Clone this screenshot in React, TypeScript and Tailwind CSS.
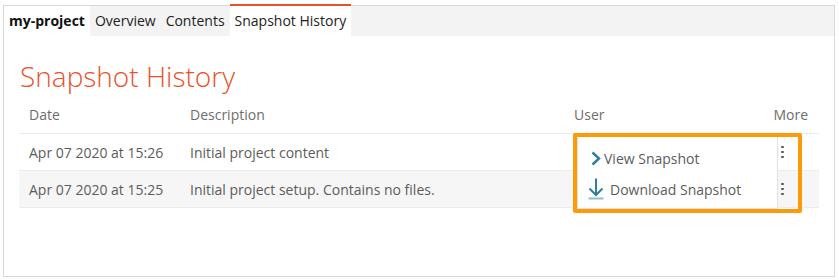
const ROWS = [
  { date: 'Apr 07 2020 at 15:26', desc: 'Initial project content', shade: false },
  { date: 'Apr 07 2020 at 15:25', desc: 'Initial project setup. Contains no files.', shade: true },
]

function Chevron() {
  return (
    <svg width="10" height="15" viewBox="0 0 10 15" className="shrink-0">
      <polyline points="1.5,1.5 8,7.5 1.5,13.5" fill="none" stroke="#2f7e9c" strokeWidth="2.4" />
    </svg>
  )
}

function DownloadIcon() {
  return (
    <svg width="16" height="22" viewBox="0 0 16 22" className="shrink-0">
      <line x1="8" y1="0.5" x2="8" y2="17" stroke="#2f7e9c" strokeWidth="2" />
      <polyline points="1.5,10.5 8,17 14.5,10.5" fill="none" stroke="#2f7e9c" strokeWidth="2" />
      <line x1="0.5" y1="20.5" x2="15.5" y2="20.5" stroke="#8dbfd0" strokeWidth="2" />
    </svg>
  )
}

function Dots() {
  return (
    <span className="flex flex-col gap-[2.5px]">
      <span className="h-[2.5px] w-[2.5px] rounded-full bg-[#555]" />
      <span className="h-[2.5px] w-[2.5px] rounded-full bg-[#555]" />
      <span className="h-[2.5px] w-[2.5px] rounded-full bg-[#555]" />
    </span>
  )
}

export default function App() {
  return (
    <div className="w-[839px] h-[280px] bg-white pt-[5px] pl-[3px] font-['Open_Sans',sans-serif] text-[14px]">
      <div className="w-[832px] h-[272px] border border-[#d8d8d8] flex flex-col">

        {/* Tabs */}
        <div className="flex h-[30px] bg-[#f3f3f3] leading-[30px] text-[#222]">
          <div className="px-[5px] bg-white font-bold text-[#111]">my-project</div>
          <div className="px-[5px]">Overview</div>
          <div className="px-[5px]">Contents</div>
          <div className="relative px-[5px] bg-white">
            <span className="absolute -top-[2px] left-0 right-0 h-[2px] bg-[#e8522a]" />
            Snapshot History
          </div>
        </div>

        {/* Title */}
        <h1 className="mt-[21px] ml-[16px] h-[38px] leading-[38px] text-[28px] font-light text-[#e8522a]">
          Snapshot History
        </h1>

        {/* Table */}
        <div className="relative mt-[1px] ml-[15px] w-[800px] text-[#5c5c5c]">
          <div className="flex h-[38px] items-center border-b border-[#ececec] text-[#6d6d6d]">
            <div className="w-[161px] pl-[10px]">Date</div>
            <div className="w-[384px] pl-[10px]">Description</div>
            <div className="w-[198px] pl-[10px]">User</div>
            <div className="w-[57px] pr-[11px] text-right">More</div>
          </div>
          {ROWS.map(r => (
            <div
              key={r.date}
              className={`flex h-[37px] items-center border-b border-[#ececec] ${r.shade ? 'bg-[#f6f6f6]' : 'bg-white'}`}
            >
              <div className="w-[161px] pl-[10px]">{r.date}</div>
              <div className="w-[384px] pl-[10px]">{r.desc}</div>
              <div className="w-[198px] pl-[10px]" />
              <div className="w-[57px] pl-[19px]">
                <Dots />
              </div>
            </div>
          ))}

          {/* Open menu, highlighted */}
          <div className="absolute left-[554px] top-[37px] w-[229px] h-[80px] border-4 border-[#fc9a0a] rounded-[2px]">
            <div className="w-[201px] h-[72px] bg-white border border-[#e2e2e2] border-t-0 flex flex-col text-[#5c5c5c]">
              <div className="flex items-center h-[32px] mt-[5px] pl-[13px] gap-[3px]">
                <Chevron />
                <span>View Snapshot</span>
              </div>
              <div className="flex items-center h-[30px] pl-[10px] gap-[6px]">
                <DownloadIcon />
                <span>Download Snapshot</span>
              </div>
            </div>
          </div>
        </div>
      </div>
    </div>
  )
}
